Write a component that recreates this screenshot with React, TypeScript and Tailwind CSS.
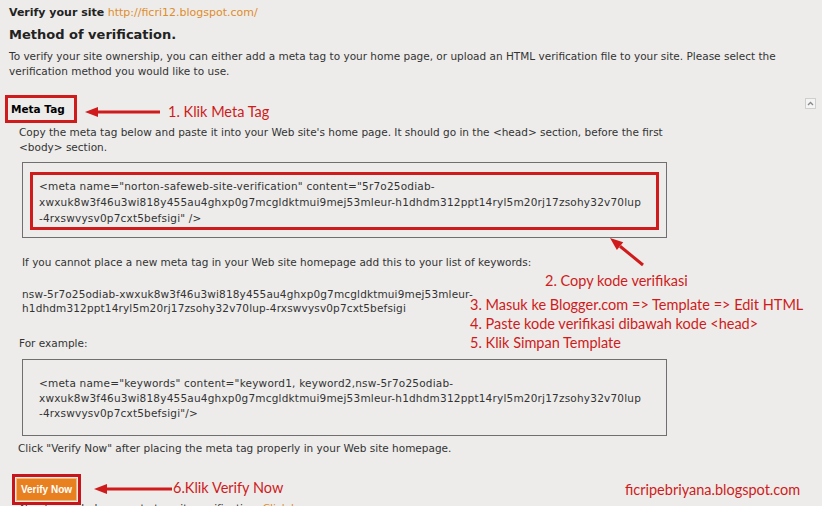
import React from 'react'

const RED = '#cf1b1b'

function Arrow({ x1, y1, x2, y2 }: { x1: number; y1: number; x2: number; y2: number }) {
  // tail at (x1,y1), head at (x2,y2)
  const dx = x2 - x1
  const dy = y2 - y1
  const len = Math.sqrt(dx * dx + dy * dy)
  const ux = dx / len
  const uy = dy / len
  const hl = 13
  const hw = 5
  const bx = x2 - ux * hl
  const by = y2 - uy * hl
  const p1 = `${bx - uy * hw},${by + ux * hw}`
  const p2 = `${bx + uy * hw},${by - ux * hw}`
  return (
    <g>
      <line x1={x1} y1={y1} x2={bx} y2={by} stroke={RED} strokeWidth={3} />
      <polygon points={`${x2},${y2} ${p1} ${p2}`} fill={RED} />
    </g>
  )
}

function Note({ x, y, children }: { x: number; y: number; children: React.ReactNode }) {
  return (
    <div
      className="absolute whitespace-nowrap font-['Lato'] text-[14.5px] leading-[18px] text-[#cf1b1b]"
      style={{ left: x, top: y }}
    >
      {children}
    </div>
  )
}

export default function App() {
  return (
    <div className="relative h-[506px] w-[822px] overflow-hidden bg-[#edecea] font-['DejaVu_Sans',sans-serif] text-[10.5px] leading-[15px] text-[#333]">
      <div className="px-[9px] pt-[5px]">
        <div className="text-[11px]">
          <span className="font-bold text-[#222]">Verify your site</span>{' '}
          <span className="text-[#e08c2a]">http://ficri12.blogspot.com/</span>
        </div>
        <div className="mt-[5px] text-[13px] font-bold leading-[19px] text-[#222]">Method of verification.</div>
        <p className="mt-[5px]">
          To verify your site ownership, you can either add a meta tag to your home page, or upload an HTML verification file to your site. Please select the
          <br />
          verification method you would like to use.
        </p>
      </div>

      {/* Meta tag header */}
      <div className="mt-[16px] flex items-start justify-between pl-[5px] pr-[6px]">
        <div className="flex h-[28px] w-[72px] items-center border-[3px] border-[#cf1b1b] pl-[3px] text-[10.5px] font-bold text-black">
          Meta Tag
        </div>
        <div className="mt-[3px] flex h-[11px] w-[11px] items-center justify-center border border-[#cfcfcf] bg-[#f4f4f4]">
          <svg width="7" height="5" viewBox="0 0 7 5">
            <path d="M1 4 L3.5 1.5 L6 4" fill="none" stroke="#888" strokeWidth="1.3" />
          </svg>
        </div>
      </div>

      <div className="pl-[19px]">
        <p className="mt-[2px]">
          Copy the meta tag below and paste it into your Web site's home page. It should go in the &lt;head&gt; section, before the first
          <br />
          &lt;body&gt; section.
        </p>
        <div className="mt-[7px] ml-[3px] w-[645px] border border-[#6f6f6f] px-[7px] pt-[9px] pb-[7px]">
          <div className="border-[3px] border-[#cf1b1b] pl-[6px] pt-[3px] pb-[1px] leading-[16px] tracking-[0.2px]">
            &lt;meta name="norton-safeweb-site-verification" content="5r7o25odiab-
            <br />
            xwxuk8w3f46u3wi818y455au4ghxp0g7mcgldktmui9mej53mleur-h1dhdm312ppt14ryl5m20rj17zsohy32v70lup
            <br />
            -4rxswvysv0p7cxt5befsigi" /&gt;
          </div>
        </div>
        <p className="mt-[17px] pl-[3px]">
          If you cannot place a new meta tag in your Web site homepage add this to your list of keywords:
        </p>
        <p className="mt-[17px] pl-[3px] leading-[14px] tracking-[0.15px]">
          nsw-5r7o25odiab-xwxuk8w3f46u3wi818y455au4ghxp0g7mcgldktmui9mej53mleur-
          <br />
          h1dhdm312ppt14ryl5m20rj17zsohy32v70lup-4rxswvysv0p7cxt5befsigi
        </p>
        <p className="mt-[21px]">For example:</p>
        <div className="mt-[8px] ml-[3px] w-[645px] border border-[#6f6f6f] pl-[16px] pt-[16px] pb-[14px] tracking-[0.2px]">
          &lt;meta name="keywords" content="keyword1, keyword2,nsw-5r7o25odiab-
          <br />
          xwxuk8w3f46u3wi818y455au4ghxp0g7mcgldktmui9mej53mleur-h1dhdm312ppt14ryl5m20rj17zsohy32v70lup
          <br />
          -4rxswvysv0p7cxt5befsigi"/&gt;
        </div>
        <p className="mt-[5px] -ml-[1px]">Click "Verify Now" after placing the meta tag properly in your Web site homepage.</p>
      </div>

      <div className="mt-[18px] pl-[12px]">
        <div className="relative z-10 inline-flex border-[3px] border-[#c8141b] p-[1px]">
          <div className="flex h-[23px] w-[61px] items-center justify-center border border-[#f2b877] bg-[#e8801f] font-['Liberation_Sans'] text-[10px] font-bold text-white">
            Verify Now
          </div>
        </div>
      </div>
      <p className="-mt-[4px] pl-[20px]">
        Need more help on meta tag site verification. <span className="text-[#e08c2a]">Click here</span>
      </p>

      {/* annotations */}
      <svg className="pointer-events-none absolute left-0 top-0" width="822" height="506">
        <Arrow x1={160} y1={112} x2={85} y2={112} />
        <Arrow x1={643} y1={265} x2={610} y2={238} />
        <Arrow x1={172} y1={489} x2={94} y2={489} />
      </svg>
      <Note x={168} y={103}>1. Klik Meta Tag</Note>
      <Note x={545} y={272}>2. Copy kode verifikasi</Note>
      <Note x={470} y={296}>3. Masuk ke Blogger.com =&gt; Template =&gt; Edit HTML</Note>
      <Note x={470} y={315}>4. Paste kode verifikasi dibawah kode &lt;head&gt;</Note>
      <Note x={470} y={334}>5. Klik Simpan Template</Note>
      <Note x={173} y={479}>6.Klik Verify Now</Note>
      <Note x={625} y={481}>ficripebriyana.blogspot.com</Note>
    </div>
  )
}
